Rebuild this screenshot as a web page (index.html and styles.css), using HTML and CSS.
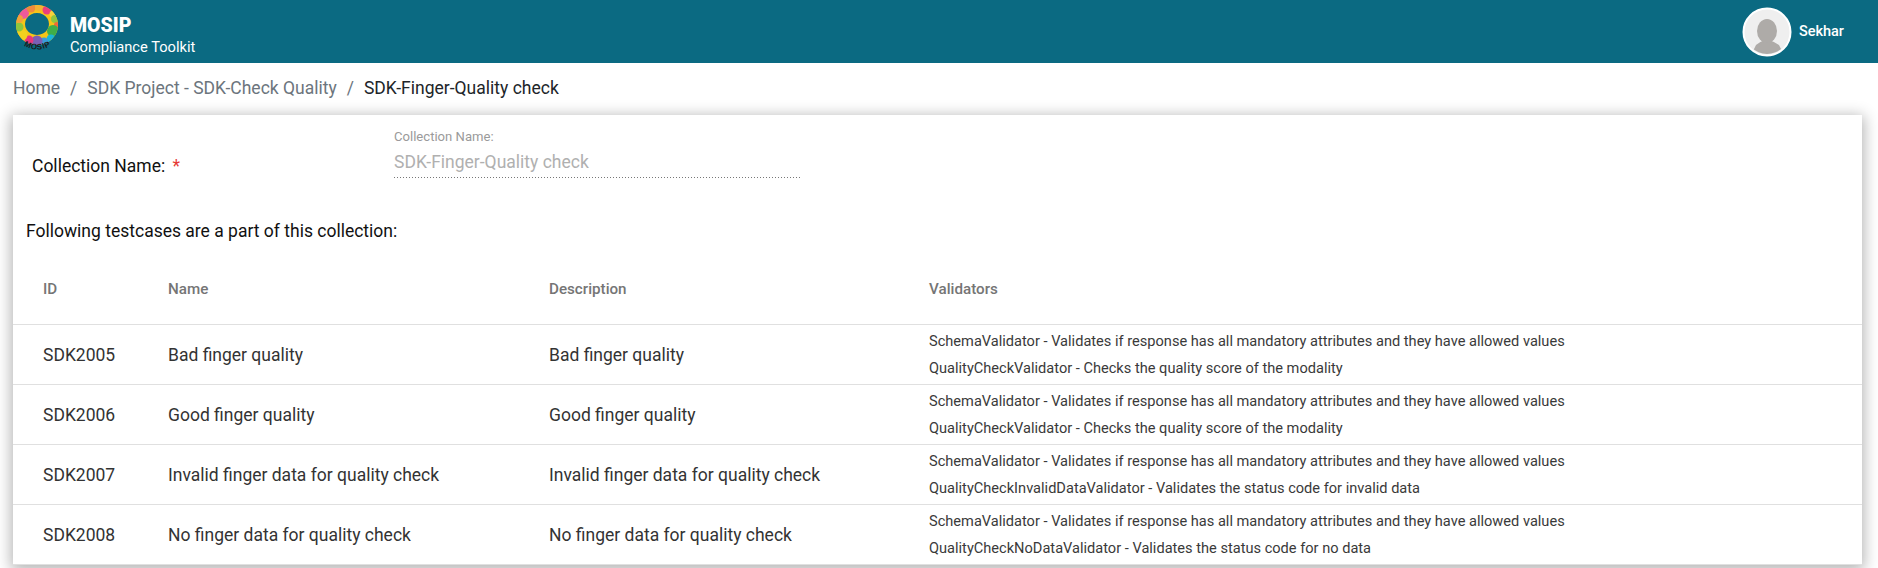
FILE: index.html
```html
<!DOCTYPE html>
<html lang="en">
<head>
<meta charset="utf-8">
<title>MOSIP Compliance Toolkit</title>
<link rel="stylesheet" href="styles.css">
</head>
<body>
<header class="topbar">
  <div class="brand">
    <svg class="logo" width="48" height="50" viewBox="0 0 48 50">
      <defs>
        <clipPath id="ring"><path clip-rule="evenodd" d="M23 1a21 20 0 1 0 .01 0zM23 9a12 11 0 1 1-.01 0z"/></clipPath>
        <path id="arc" d="M6 39 Q23 52 41 39"/>
      </defs>
      <g clip-path="url(#ring)">
        <rect width="48" height="44" fill="#f5c518"/>
        <circle cx="9" cy="9" r="6" fill="#ef5a9a"/>
        <circle cx="17" cy="4" r="4.5" fill="#f08a3c"/>
        <circle cx="25" cy="3" r="4" fill="#f3b233"/>
        <circle cx="33" cy="6" r="4.5" fill="#ea3f7d"/>
        <circle cx="39" cy="10" r="3.5" fill="#f7d13a"/>
        <circle cx="41" cy="15" r="4" fill="#8fc640"/>
        <circle cx="43" cy="21" r="3" fill="#f2673a"/>
        <circle cx="39" cy="27" r="6" fill="#3fae49"/>
        <circle cx="37" cy="35" r="4.5" fill="#19b5d8"/>
        <circle cx="30" cy="38" r="4.5" fill="#3a9bd9"/>
        <circle cx="23" cy="37" r="5.5" fill="#7a5fb5"/>
        <circle cx="15" cy="36" r="4.5" fill="#e8377d"/>
        <circle cx="8" cy="31" r="5.5" fill="#f2d21f"/>
        <circle cx="5" cy="23" r="4.5" fill="#8cc63f"/>
        <circle cx="5" cy="15" r="4" fill="#f3a33a"/>
      </g>
      <text class="logo-text"><textPath href="#arc" startOffset="50%" text-anchor="middle">MOSIP</textPath></text>
    </svg>
    <div class="brand-text">
      <span class="brand-name">MOSIP</span>
      <span class="brand-sub">Compliance Toolkit</span>
    </div>
  </div>
  <div class="user">
    <svg class="avatar" width="50" height="50" viewBox="0 0 50 50">
      <circle cx="25" cy="25" r="23.5" fill="#efefef" stroke="#fff" stroke-width="2"/>
      <clipPath id="inner"><circle cx="25" cy="25" r="22"/></clipPath>
      <g clip-path="url(#inner)">
        <path d="M9 48 L14 38 Q17 35 23 33 Q25 35 27 33 Q33 35 37 38 L42 48z" fill="#aeaba8"/>
        <ellipse cx="25" cy="24" rx="10" ry="12" fill="#aeaba8"/>
      </g>
    </svg>
    <span class="user-name">Sekhar</span>
  </div>
</header>

<nav class="crumbs">
  <span class="crumb">Home</span>
  <span class="crumb-sep">/</span>
  <span class="crumb">SDK Project - SDK-Check Quality</span>
  <span class="crumb-sep">/</span>
  <span class="crumb crumb-active">SDK-Finger-Quality check</span>
</nav>

<main class="card">
  <div class="form-row">
    <div class="form-label">Collection Name: <span class="req">*</span></div>
    <div class="field">
      <div class="field-label">Collection Name:</div>
      <div class="field-value">SDK-Finger-Quality check</div>
    </div>
  </div>
  <p class="intro">Following testcases are a part of this collection:</p>
  <table class="cases">
    <thead>
      <tr><th>ID</th><th>Name</th><th>Description</th><th>Validators</th></tr>
    </thead>
    <tbody>
      <tr>
        <td>SDK2005</td><td>Bad finger quality</td><td>Bad finger quality</td>
        <td class="vals"><div>SchemaValidator - Validates if response has all mandatory attributes and they have allowed values</div><div>QualityCheckValidator - Checks the quality score of the modality</div></td>
      </tr>
      <tr>
        <td>SDK2006</td><td>Good finger quality</td><td>Good finger quality</td>
        <td class="vals"><div>SchemaValidator - Validates if response has all mandatory attributes and they have allowed values</div><div>QualityCheckValidator - Checks the quality score of the modality</div></td>
      </tr>
      <tr>
        <td>SDK2007</td><td>Invalid finger data for quality check</td><td>Invalid finger data for quality check</td>
        <td class="vals"><div>SchemaValidator - Validates if response has all mandatory attributes and they have allowed values</div><div>QualityCheckInvalidDataValidator - Validates the status code for invalid data</div></td>
      </tr>
      <tr>
        <td>SDK2008</td><td>No finger data for quality check</td><td>No finger data for quality check</td>
        <td class="vals"><div>SchemaValidator - Validates if response has all mandatory attributes and they have allowed values</div><div>QualityCheckNoDataValidator - Validates the status code for no data</div></td>
      </tr>
    </tbody>
  </table>
</main>
</body>
</html>
```

FILE: styles.css
```css
* { box-sizing: border-box; }
html, body { margin: 0; height: 568px; overflow: hidden; }
body { font-family: Roboto, "Liberation Sans", sans-serif; background: #fff; color: #212121; }

.topbar {
  height: 63px;
  background: #0b6a82;
  color: #fff;
  display: flex;
  justify-content: space-between;
  align-items: center;
  padding: 0 34px 0 14px;
}
.brand { display: flex; align-items: flex-start; gap: 8px; height: 63px; padding-top: 4px; }
.logo { display: block; }
.logo-text { font: 700 8px "Liberation Sans", sans-serif; fill: #1a1a1a; letter-spacing: .6px; }
.brand-text { display: flex; flex-direction: column; padding-top: 10px; }
.brand-name { font-size: 19.5px; font-weight: 900; line-height: 23px; }
.brand-sub { font-size: 14.7px; line-height: 20px; }

.user { display: flex; align-items: center; gap: 7px; }
.avatar { display: block; }
.user-name { font-size: 14.5px; font-weight: 500; }

.crumbs {
  height: 52px;
  padding: 0 13px 3px;
  display: flex;
  align-items: center;
  gap: 10px;
  font-size: 17.5px;
  color: #6c757d;
}
.crumb-active { color: #212529; }

.card {
  margin: 0 16px 0 13px;
  background: #fff;
  box-shadow: 0 3px 14px 2px rgba(0,0,0,.3);
}
.form-row { display: flex; height: 86px; padding: 0 19px; }
.form-label { width: 362px; padding-top: 40px; font-size: 17.5px; line-height: 22px; color: #111; }
.req { color: #e53935; margin-left: 3px; }
.field { width: 407px; padding-top: 15px; }
.field-label { font-size: 13.1px; line-height: 14px; color: #9a9a9a; }
.field-value {
  font-size: 17.5px;
  line-height: 24px;
  height: 34px;
  padding-top: 6px;
  color: #b0b0b0;
  background: repeating-linear-gradient(90deg, #777 0 1px, transparent 1px 3px) bottom / 100% 1px no-repeat;
}
.intro { margin: 0; padding: 20px 13px 0; font-size: 17.5px; line-height: 20px; color: #111; }

.cases { width: 100%; border-collapse: collapse; table-layout: fixed; margin-top: 18px; }
.cases th {
  height: 65px;
  padding: 0 0 4px 0;
  text-align: left;
  vertical-align: middle;
  font-size: 15.2px;
  font-weight: 500;
  color: #757575;
  border-bottom: 1px solid #e0e0e0;
}
.cases td {
  height: 60px;
  padding: 2px 0 0;
  font-size: 17.5px;
  color: #333;
  border-bottom: 1px solid #e0e0e0;
  vertical-align: middle;
}
.cases th:nth-child(1), .cases td:nth-child(1) { width: 155px; padding-left: 30px; }
.cases th:nth-child(2), .cases td:nth-child(2) { width: 381px; }
.cases th:nth-child(3), .cases td:nth-child(3) { width: 380px; }
.cases td.vals { font-size: 14.6px; line-height: 27px; color: #3a3a3a; }
```
